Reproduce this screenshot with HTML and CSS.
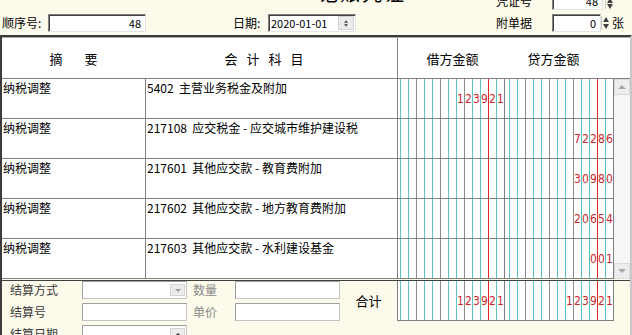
FILE: index.html
```html
<!DOCTYPE html>
<html>
<head>
	<meta charset="utf-8">
	<title>记账凭证</title>
	<link rel="stylesheet" href="styles.css">
</head>
<body>
	<div class="top">
		<div class="top_row">
			<div class="title">记账凭证</div>
			<span class="lbl lbl_vno">凭证号</span>
			<div class="box box_vno">48</div>
			<span class="spin spin_vno"><i class="up"></i><i class="down"></i></span>
		</div>
		<div class="top_row">
			<span class="lbl lbl_seq">顺序号:</span>
			<div class="box box_seq">48</div>
			<span class="lbl lbl_date">日期:</span>
			<div class="box box_date">2020-01-01<span class="date_btn"><i class="up"></i><i class="down"></i></span></div>
			<span class="lbl lbl_att">附单据</span>
			<div class="box box_att">0</div>
			<span class="spin spin_att"><i class="up"></i><i class="down"></i></span>
			<span class="lbl">张</span>
		</div>
	</div>

	<div class="voucher">
		<div class="v_head">
			<div class="h_sum"><span>摘</span><span>要</span></div>
			<div class="h_acc"><span>会</span><span>计</span><span>科</span><span>目</span></div>
			<div class="h_money">
				<span class="h_debit">借方金额</span>
				<span class="h_credit">贷方金额</span>
			</div>
		</div>

		<div class="v_main">
			<div class="v_rows">
				<div class="row">
					<div class="c_sum">纳税调整</div>
					<div class="c_acc">5402&nbsp; 主营业务税金及附加</div>
					<div class="c_money">
						<div class="amt" data-v="123921"></div>
						<div class="amt credit" data-v=""></div>
					</div>
				</div>
				<div class="row">
					<div class="c_sum">纳税调整</div>
					<div class="c_acc">217108&nbsp; 应交税金 - 应交城市维护建设税</div>
					<div class="c_money">
						<div class="amt" data-v=""></div>
						<div class="amt credit" data-v="72286"></div>
					</div>
				</div>
				<div class="row">
					<div class="c_sum">纳税调整</div>
					<div class="c_acc">217601&nbsp; 其他应交款 - 教育费附加</div>
					<div class="c_money">
						<div class="amt" data-v=""></div>
						<div class="amt credit" data-v="30980"></div>
					</div>
				</div>
				<div class="row">
					<div class="c_sum">纳税调整</div>
					<div class="c_acc">217602&nbsp; 其他应交款 - 地方教育费附加</div>
					<div class="c_money">
						<div class="amt" data-v=""></div>
						<div class="amt credit" data-v="20654"></div>
					</div>
				</div>
				<div class="row">
					<div class="c_sum">纳税调整</div>
					<div class="c_acc">217603&nbsp; 其他应交款 - 水利建设基金</div>
					<div class="c_money">
						<div class="amt" data-v=""></div>
						<div class="amt credit" data-v="001"></div>
					</div>
				</div>
			</div>
			<div class="v_scroll">
				<span class="sb_btn"><i class="tri_up"></i></span>
				<span class="sb_btn"><i class="tri_down"></i></span>
			</div>
		</div>

		<div class="v_foot">
			<div class="form">
				<span class="f_lbl">结算方式</span>
				<div class="f_box"><span class="f_drop"><i class="tri_down"></i></span></div>
				<span class="f_lbl gray">数量</span>
				<div class="f_box"></div>

				<span class="f_lbl">结算号</span>
				<div class="f_box"></div>
				<span class="f_lbl gray">单价</span>
				<div class="f_box"></div>

				<span class="f_lbl">结算日期</span>
				<div class="f_box"><span class="f_drop"><i class="tri_up"></i></span></div>
			</div>
			<div class="sum_lbl">合计</div>
			<div class="c_money c_total">
				<div class="amt" data-v="123921"></div>
				<div class="amt credit" data-v="123921"></div>
			</div>
		</div>
	</div>

	<script type="text/javascript">
		// 金额格：每栏13位，右对齐填数字
		var amts = document.querySelectorAll('.amt');
		for (var i = 0; i < amts.length; i++) {
			var v = amts[i].getAttribute('data-v') || '';
			var html = '';
			for (var k = 0; k < 13; k++) {
				var cls = 'd';
				if (k == 2 || k == 5 || k == 8) cls += ' g';
				if (k == 11) cls += ' r';
				var pos = k - (13 - v.length);
				html += '<span class="' + cls + '">' + (pos >= 0 ? v[pos] : '') + '</span>';
			}
			amts[i].innerHTML = html;
		}
	</script>
</body>
</html>
```

FILE: styles.css
```css
* {
	margin: 0;
	padding: 0;
	box-sizing: border-box;
}

body {
	width: 632px;
	height: 335px;
	overflow: hidden;
	background: #fcfaea;
	color: #000;
	font: 12px "Noto Sans CJK SC", sans-serif;
}

i {
	display: block;
}

/* 顶部 */
.top {
	margin-top: -8px;
	height: 43px;
	display: flex;
	flex-direction: column;
	gap: 4px;
}

.top_row {
	height: 18px;
	display: flex;
	align-items: center;
}

.title {
	width: 200px;
	margin-left: 262px;
	text-align: center;
	font-size: 20px;
	line-height: 18px;
	letter-spacing: 2px;
	margin-top: -17px;
}

.lbl {
	white-space: nowrap;
	line-height: 18px;
}

.lbl_vno {
	margin-left: 34px;
	width: 56px;
}

.lbl_seq {
	margin-left: 2px;
	width: 46px;
}

.lbl_date {
	margin-left: 87px;
	width: 35px;
}

.lbl_att {
	margin-left: 140px;
	width: 56px;
}

.box {
	height: 18px;
	background: #fff;
	border: 1px solid;
	border-color: #808080 #e4e4e4 #e4e4e4 #808080;
	box-shadow: inset 1px 1px #404040;
	font-size: 11px;
	line-height: 16px;
	text-align: right;
	padding-right: 4px;
	position: relative;
}

.box_vno {
	width: 51px;
}

.box_seq {
	width: 98px;
}

.box_date {
	width: 88px;
	text-align: left;
	padding-left: 2px;
}

.box_att {
	width: 49px;
}

.spin {
	width: 10px;
	height: 14px;
	margin: 0 2px;
	display: flex;
	flex-direction: column;
	justify-content: center;
	gap: 2px;
	border-left: 1px solid #c8c8c8;
	padding-left: 1px;
}

.spin_vno {
	align-self: flex-end;
	height: 12px;
	margin-bottom: 1px;
	gap: 1px;
}

.spin_att {
	margin: 0 1px 0 0;
}

.up {
	width: 0;
	height: 0;
	border: 3px solid transparent;
	border-top: 0;
	border-bottom: 5px solid #404040;
}

.down {
	width: 0;
	height: 0;
	border: 3px solid transparent;
	border-bottom: 0;
	border-top: 5px solid #404040;
}

.date_btn {
	position: absolute;
	right: 1px;
	top: 1px;
	width: 16px;
	height: 14px;
	background: #ececec;
	border: 1px solid #d0d0d0;
	display: flex;
	flex-direction: column;
	align-items: center;
	justify-content: center;
	gap: 1px;
}

.date_btn .up {
	border-width: 0 2px 3px;
	border-bottom-color: #606060;
}

.date_btn .down {
	border-width: 3px 2px 0;
	border-top-color: #606060;
}

/* 凭证表格 */
.voucher {
	border-top: 2px solid #3c3c3c;
	border-left: 2px solid #3c3c3c;
	border-right: 2px solid #c8c8c8;
}

.v_head {
	height: 42px;
	display: flex;
	background: #fff;
	border-top: 1px solid #a8a8a8;
	border-bottom: 1px solid #808080;
	font-size: 13px;
}

.h_sum {
	width: 143px;
	display: flex;
	justify-content: center;
	align-items: center;
	gap: 22px;
}

.h_acc {
	width: 252px;
	display: flex;
	justify-content: center;
	align-items: center;
	gap: 9px;
	padding-right: 14px;
}

.h_money {
	width: 217px;
	border-left: 1px solid #808080;
	display: flex;
	align-items: center;
	padding-left: 2px;
}

.h_debit {
	width: 105px;
	text-align: center;
}

.h_credit {
	width: 109px;
	text-align: center;
	padding-right: 12px;
}

.v_main {
	display: flex;
}

.v_rows {
	width: 612px;
	background: #fff;
}

.row {
	height: 40px;
	display: flex;
	border-bottom: 1px solid #808080;
}

.c_sum {
	width: 143px;
	padding-left: 1px;
	line-height: 17px;
}

.c_acc {
	width: 252px;
	border-left: 1px solid #808080;
	padding-left: 1px;
	line-height: 17px;
}

.c_money {
	width: 217px;
	border-left: 1px solid #808080;
	padding-left: 2px;
	display: flex;
}

.amt {
	display: flex;
	border-right: 1px solid #808080;
}

.credit {
	margin-left: 4px;
}

.d {
	width: 8px;
	border-left: 1px solid #5cc4c4;
	display: flex;
	align-items: center;
	justify-content: center;
	color: #c8282d;
	font: 12px "DejaVu Sans Condensed", "Liberation Sans", sans-serif;
}

.d.g {
	border-left-color: #8c8c8c;
}

.d.r {
	border-left-color: #e02828;
}

.v_scroll {
	width: 16px;
	height: 200px;
	background: #f6f6f6;
	display: flex;
	flex-direction: column;
	justify-content: space-between;
}

.sb_btn {
	height: 16px;
	background: #ededed;
	border: 1px solid #dcdcdc;
	display: flex;
	align-items: center;
	justify-content: center;
}

.tri_up {
	width: 0;
	height: 0;
	border: 4px solid transparent;
	border-top: 0;
	border-bottom: 4px solid #a8a8a8;
}

.tri_down {
	width: 0;
	height: 0;
	border: 4px solid transparent;
	border-bottom: 0;
	border-top: 4px solid #a8a8a8;
}

/* 底部 */
.v_foot {
	margin-top: 1px;
	border-top: 1px solid #404040;
	display: flex;
	align-items: flex-start;
}

.form {
	width: 338px;
	padding: 0 0 0 8px;
	display: grid;
	grid-template-columns: 72px 105px 48px 105px;
	grid-auto-rows: 18px;
	row-gap: 4px;
}

.f_lbl {
	line-height: 18px;
	color: #3a3a3a;
}

.f_lbl.gray {
	color: #8a8a8a;
	padding-left: 6px;
}

.f_box {
	background: #fff;
	border: 1px solid #c4c4c4;
	border-top-color: #a0a0a0;
	border-left-color: #a0a0a0;
	position: relative;
}

.f_drop {
	position: absolute;
	right: 1px;
	top: 2px;
	width: 15px;
	height: 12px;
	background: #ececec;
	border: 1px solid #d4d4d4;
	display: flex;
	align-items: center;
	justify-content: center;
}

.f_drop .tri_down,
.f_drop .tri_up {
	border-width: 3px;
	border-top-color: #999;
}

.f_drop .tri_up {
	border-top: 0;
	border-bottom-color: #333;
}

.f_drop .tri_down {
	border-bottom: 0;
}

.sum_lbl {
	width: 57px;
	height: 39px;
	line-height: 39px;
	text-align: center;
	font-size: 13px;
}

.c_total {
	height: 40px;
	background: #fff;
	border-bottom: 1px solid #808080;
}
```
